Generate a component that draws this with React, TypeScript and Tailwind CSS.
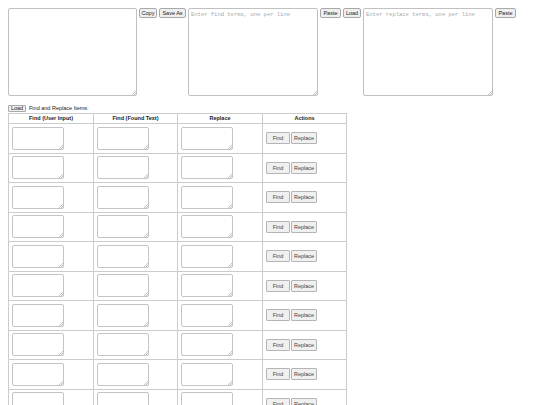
import React from "react";

const btn =
  "h-[10px] leading-[8px] text-[5.5px] text-[#222] border border-[#a9a9a9] bg-[#efefef] rounded-[2px] px-0";

// tiny resize grip, like the scaled-down native one
const Grip = () => (
  <svg
    width="4"
    height="4"
    viewBox="0 0 4 4"
    className="absolute right-[1px] bottom-[1px] pointer-events-none"
  >
    <path d="M4 0L0 4M4 2L2 4" stroke="#9a9a9a" strokeWidth="0.6" />
  </svg>
);

type AreaProps = { className: string; placeholder?: string };

const Area: React.FC<AreaProps> = ({ className, placeholder }) => (
  <div className="relative shrink-0 w-fit">
    <textarea
      placeholder={placeholder}
      className={`block resize-none border border-[#c0c0c0] rounded-[2px] bg-white ${className}`}
    />
    <Grip />
  </div>
);

const Cell: React.FC<{ children: React.ReactNode }> = ({ children }) => (
  <td className="border border-[#cccccc] h-[29.5px] px-[3px] py-0 align-middle">
    {children}
  </td>
);

const SmallArea = () => <Area className="w-[52px] h-[23px] border-[#c4c4c4]" />;

const mono =
  "px-[2px] py-[2px] text-[5.5px] leading-[7px] font-['Liberation_Mono',monospace] placeholder:text-[#a8a8a8]";

const App: React.FC = () => {
  const rows = Array.from({ length: 11 });
  return (
    <div className="p-[8px] bg-white min-h-[405px] font-['Liberation_Sans',Arial,sans-serif] text-[#222]">
      <div className="flex items-start gap-[2px]">
        <Area className="w-[129px] h-[88px]" />
        <button className={`${btn} w-[18px]`}>Copy</button>
        <button className={`${btn} w-[27px]`}>Save As</button>
        <Area
          placeholder="Enter find terms, one per line"
          className={`w-[130px] h-[88px] ${mono}`}
        />
        <button className={`${btn} w-[21px]`}>Paste</button>
        <button className={`${btn} w-[18px]`}>Load</button>
        <Area
          placeholder="Enter replace terms, one per line"
          className={`w-[130px] h-[88px] ${mono}`}
        />
        <button className={`${btn} w-[21px]`}>Paste</button>
      </div>

      <div className="mt-[9px] flex items-center gap-[3px] h-[7px]">
        <button className="h-[7px] w-[18px] leading-[5px] text-[5.5px] border border-[#a9a9a9] bg-[#efefef] rounded-[1px]">
          Load
        </button>
        <span className="text-[5.5px] leading-[7px]">Find and Replace Items:</span>
      </div>

      <table className="mt-[1px] border-collapse table-fixed w-[338px] text-[5.5px]">
        <colgroup>
          <col className="w-[85px]" />
          <col className="w-[84px]" />
          <col className="w-[85px]" />
          <col className="w-[84px]" />
        </colgroup>
        <thead>
          <tr>
            <th className="border border-[#cccccc] h-[10px] p-0 font-bold text-center">Find (User Input)</th>
            <th className="border border-[#cccccc] h-[10px] p-0 font-bold text-center">Find (Found Text)</th>
            <th className="border border-[#cccccc] h-[10px] p-0 font-bold text-center">Replace</th>
            <th className="border border-[#cccccc] h-[10px] p-0 font-bold text-center">Actions</th>
          </tr>
        </thead>
        <tbody>
          {rows.map((_, i) => (
            <tr key={i}>
              <Cell>
                <SmallArea />
              </Cell>
              <Cell>
                <SmallArea />
              </Cell>
              <Cell>
                <SmallArea />
              </Cell>
              <Cell>
                <div className="flex items-center gap-[1px]">
                  <button className="h-[12px] w-[24px] text-[5.5px] text-[#444] border border-[#b5b5b5] bg-[#f0f0f0] rounded-[1px]">
                    Find
                  </button>
                  <button className="h-[12px] w-[26px] text-[5.5px] text-[#444] border border-[#b5b5b5] bg-[#f0f0f0] rounded-[1px] overflow-hidden whitespace-nowrap">
                    Replace
                  </button>
                </div>
              </Cell>
            </tr>
          ))}
        </tbody>
      </table>
    </div>
  );
};

export default App;
